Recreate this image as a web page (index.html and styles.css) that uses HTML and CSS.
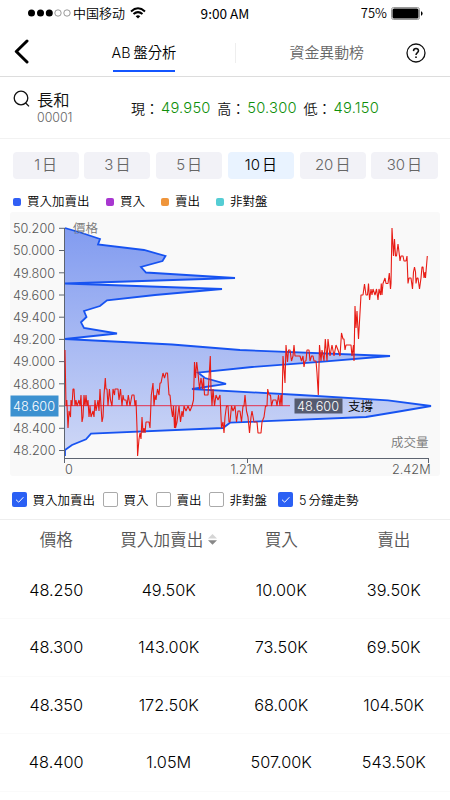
FILE: index.html
```html
<!DOCTYPE html>
<html lang="zh-Hant">
<head>
<meta charset="utf-8">
<title>AB盤分析</title>
<link rel="stylesheet" href="styles.css">
</head>
<body>
<div class="status">
  <div class="carrier">
    <svg width="43" height="8" viewBox="0 0 43 8"><g fill="#000"><circle cx="3.5" cy="4" r="3.5"/><circle cx="12.5" cy="4" r="3.5"/><circle cx="21.3" cy="4" r="3.5"/></g><g fill="none" stroke="#555" stroke-width=".6"><circle cx="30" cy="4" r="3.2"/><circle cx="39" cy="4" r="3.2"/></g></svg>
    <span lang="zh-Hans">中国移动</span>
    <svg class="wifi" width="16" height="12" viewBox="0 0 16 12" fill="none" stroke="#000" stroke-width="2"><path d="M1 4.4Q8-1.8 15 4.4M3.5 7.1Q8 3.2 12.5 7.1"/><path d="M8 11.5 5.7 9.2Q8 7.5 10.3 9.2Z" fill="#000" stroke="none"/></svg>
  </div>
  <div class="clock">9:00 AM</div>
  <div class="power"><span>75%</span>
    <svg width="32" height="13" viewBox="0 0 32 13"><rect x=".5" y=".5" width="28" height="12" rx="2" fill="#fff" stroke="#999"/><rect x="1.5" y="1.5" width="26" height="10" rx="1.5"/><path d="M30 4.3q1.6.4 1.6 2.2T30 8.7z"/></svg>
  </div>
</div>
<header class="nav">
  <svg class="back" width="15" height="25" viewBox="0 0 15 25"><path d="M13 2 2.3 12.5 13 23" fill="none" stroke="#000" stroke-width="3" stroke-linecap="round" stroke-linejoin="round"/></svg>
  <div class="tab active">AB<span class="hair"></span>盤分析</div>
  <i class="divider"></i>
  <div class="tab">資金異動榜</div>
  <svg class="help" width="20" height="20" viewBox="0 0 20 20" fill="none" stroke="#111" stroke-width="1.3"><circle cx="10" cy="10" r="9"/><path d="M7.5 8.1Q7.6 5.5 10 5.5T12.5 7.8C12.5 9.7 10 9.6 10 12" stroke-width="1.5"/><circle cx="10" cy="14.2" r=".9" fill="#111" stroke="none"/></svg>
</header>
<section class="stock">
  <svg class="search" width="18" height="18" viewBox="0 0 18 18" fill="none" stroke="#111" stroke-width="1.3"><circle cx="8" cy="8" r="6.8"/><path d="m12.4 12.8 3.6 3.6"/></svg>
  <div class="name"><b>長和</b><small>00001</small></div>
  <div class="quotes"><span lang="ja">現：</span><em>49.950</em><span lang="ja">高：</span><em>50.300</em><span lang="ja">低：</span><em>49.150</em></div>
</section>
<div class="periods">
  <div>1<i></i>日</div><div>3<i></i>日</div><div>5<i></i>日</div><div class="on">10<i></i>日</div><div>20<i></i>日</div><div>30<i></i>日</div>
</div>
<div class="legend">
  <span class="key blue">買入加賣出</span><span class="key purple">買入</span><span class="key orange">賣出</span><span class="key cyan">非對盤</span>
</div>
<svg class="chart" viewBox="10 212 430 264" width="430" height="264">
  <defs><linearGradient id="area" x1="0" y1="0" x2="0" y2="1"><stop offset="0" stop-color="#2452e9" stop-opacity=".56"/><stop offset="1" stop-color="#2452e9" stop-opacity=".2"/></linearGradient></defs>
  <rect class="plot" x="10" y="212" width="430" height="264" rx="3"/>
  <path class="volume" d="M65 228 82 233 100 239 98 244.5 144 250 165.5 256 162.5 261 141 267 146 272.5 235 278 65 283.5 222 289 155 295 107 300.3 100 306 84 311 86.5 317 81 322.3 84 328 117 333.5 65 339 172 344.5 240 350 390 356 320 361.8 252 367 198 372.7 205 378 226 383.8 192 389 300 395 388 400.3 431 406 399 411.5 366 417 230 422.7 223 428 91 433.7 86 439.3 72 445 65 450 V456"/>
  <path class="axis" d="M64.5 228V458.5H428.5M59 228.3h6M59 250.5h6M59 272.8h6M59 295h6M59 317.2h6M59 339.4h6M59 361.6h6M59 383.8h6M59 406h6M59 428.3h6M59 450.5h6M64.5 458v5M247.5 458v5M428.5 458v5"/>
  <path class="support" d="M65 405.7H290"/>
  <path class="price" d="M65 350 66 406 66.8 400 68 428 69 411 70.5 417 71 400 72 406 73 389 74 389 75 406 76 400 77 406 79 400 80 406 81 395 82 422 83 417 84 395 85 406 86 395 87 406 88 400 89 417 90 406 91 417 93 411 94 417 95 400 96 411 98 400 99 411 100 389 101 406 102 422 103 417 104 395 105.3 378 106 389 107 389 108 406 109.4 389 110.5 400 112 406 113 389 114.5 395 115 389 118 389 119 400 120.5 389 122 406 123 395 124 400 126 400 127 406 128.3 395 130 406 132 395 134 395 135 406 136 400 137 428 137.6 456 139 439 140 433 141 439 142 417 143 433 144 428 145 433 146 422 149 422 150 428 151.3 395 153 383 154 406 155 395 156 400 157.5 389 159 395 160 383 161 383 163 373 164.5 378 166 373 167.5 373 169 395 170 395 171 406 172.5 417 173.5 406 174.5 428 176 406 175.5 428 177 422 179 406 180.5 422 182 411 183 417 184 406 186 411 188 406 190 411 192 406 193.5 400 194.5 362 195.5 378 196.7 362 198 373 199.5 389 201 378 202.5 389 203.5 378 204.5 395 208 395 209 378 210.3 356 211 389 212 406 213 389 214.5 406 216 395 218 400 220 395 221.5 428 223 422 224 433 225 417 226.5 406 228 406 229 422 230 422 231.5 406 233 411 235 406 236.5 422 238 411 240 411 241.5 422 243 406 244 406 245 395 246.5 411 248 417 249.5 433 251 417 252 411 254 422 257 422 258 433 261 433 262 422 264 417 265.5 406 267 406 267.7 389 269 395 270.5 395 271.5 406 273 400 276 400 277 406 278.5 395 280 406 281 395 282 406 283 356 285 383 286 345 287.5 362 288.5 350 290 350 291.5 361 293 356 294 345 295 356 300 356 301.5 361 303 356 304 367 305 361 306 361 307 350 309 350 310 361 311.5 356 313 356 314 361 316 361 317 373 318.3 395 319.5 345 321 361 322 350 324 361 325.3 339 327 361 328 339 330 356 332 345 334 356 336 345 338 350 340 356 341.5 333 343 339 344 339 345 350 346 345 351 345 352 356 353.5 345 354 361 355 306 356 328 357 311 358.5 339 361 295 363 295 364.5 284 366 295 367.5 295 368.5 283.5 369.6 300 371 289 372 295 373 289 375 295 376.5 289 378 300 379 289 380.5 295 381.3 283.5 382 295 383 283.5 385 278 386 283.5 388 283.5 389.3 273 390.5 289 391 283.5 392 228 393.5 256 394.5 239 395.5 256 396.5 256 398 244 399.5 256 400 261 401 256 403 256 404 261 406 261 407 256 408 283.5 409 278 411 278 412.5 289 413.5 272 414.5 267 415.5 272 416 283.5 417 278 418 278 419.5 289 421 278 422 267 423 267 424 278 425 272 425.5 278 427.3 256"/>
  <g class="ticks"><text x="13" y="233">50.200</text><text x="13" y="255.2">50.000</text><text x="13" y="277.5">49.800</text><text x="13" y="299.7">49.600</text><text x="13" y="321.9">49.400</text><text x="13" y="344.1">49.200</text><text x="13" y="366.3">49.000</text><text x="13" y="388.5">48.800</text><text x="13" y="433">48.400</text><text x="13" y="455.2">48.200</text></g>
  <rect class="current" x="10.5" y="395.5" width="48" height="21"/><text class="current-text" x="13" y="410.7">48.600</text>
  <text class="label" x="73" y="232.5">價格</text>
  <text class="label" x="391" y="447">成交量</text>
  <g class="volumes"><text x="65" y="474">0</text><text x="230.5" y="474">1.21M</text><text x="392" y="474">2.42M</text></g>
  <rect class="tag" x="294.5" y="398.5" width="48" height="15"/><text class="tag-text" x="297" y="410.7">48.600</text><text class="tag-note" x="348" y="411">支撐</text>
</svg>
<div class="toggles">
  <label class="checked"><svg viewBox="0 0 15 15"><path d="M4 7.7 6.7 10.2 11.4 5.2"/></svg><span>買入加賣出</span></label>
  <label><svg viewBox="0 0 15 15"></svg><span>買入</span></label>
  <label><svg viewBox="0 0 15 15"></svg><span>賣出</span></label>
  <label><svg viewBox="0 0 15 15"></svg><span>非對盤</span></label>
  <label class="checked"><svg viewBox="0 0 15 15"><path d="M4 7.7 6.7 10.2 11.4 5.2"/></svg><span>5<i></i>分鐘走勢</span></label>
</div>
<div class="table">
  <div class="row head"><div>價格</div><div>買入加賣出<svg width="9" height="11" viewBox="0 0 9 11"><path d="M0 4.5 4.5 0 9 4.5z" fill="#d5d5d5"/><path d="M0 6.2 4.5 10.7 9 6.2z" fill="#888"/></svg></div><div>買入</div><div>賣出</div></div>
  <div class="row"><div>48.250</div><div>49.50K</div><div>10.00K</div><div>39.50K</div></div>
  <div class="row"><div>48.300</div><div>143.00K</div><div>73.50K</div><div>69.50K</div></div>
  <div class="row"><div>48.350</div><div>172.50K</div><div>68.00K</div><div>104.50K</div></div>
  <div class="row"><div>48.400</div><div>1.05M</div><div>507.00K</div><div>543.50K</div></div>
</div>
</body>
</html>
```
FILE: styles.css
```css
* { box-sizing: border-box; }
body { margin: 0; width: 450px; height: 800px; overflow: hidden; background: #fff; color: #111; font-family: Inter, "Noto Sans CJK TC", sans-serif; font-weight: 350; }
svg { display: block; flex: none; }
em, i { font-style: normal; }
.status { display: grid; grid-template-columns: 1fr 60px 1fr; height: 26px; align-items: center; font: 13px/26px "Noto Sans CJK TC", sans-serif; font-weight: 350; color: #000; white-space: nowrap; }
.carrier { display: flex; align-items: center; padding-left: 28px; }
.carrier span { margin-left: 2px; font-family: "Noto Sans CJK SC", sans-serif; }
.wifi { margin-left: 5px; }
.clock { text-align: center; font-size: 13.6px; font-weight: 400; }
.power { display: flex; justify-content: flex-end; align-items: center; gap: 4px; padding-right: 27px; }
.nav { display: flex; height: 51px; border-bottom: 1px solid #ddd; align-items: flex-start; padding: 13px 24px 0 14px; }
.tab { font-size: 14.9px; line-height: 28px; color: #666; white-space: nowrap; height: 33px; }
.tab.active { margin-left: 84px; width: 62px; color: #000; border-bottom: 2px solid #1455ff; font-size: 14.3px; display: flex; justify-content: center; }
.hair { flex: 0 0 3px; }
.divider { width: 1px; height: 20px; background: #eee; margin: 4px 53.5px 0 60px; }
.help { margin: 4px 0 0 auto; }
.stock { display: flex; height: 62px; border-bottom: 1px solid #f2f2f2; padding-left: 13px; }
.search { margin-top: 13px; }
.name { width: 94px; margin-left: 6px; padding-top: 12px; }
.name b, .name small { display: block; }
.name b { font-size: 16.3px; line-height: 22px; font-weight: 350; color: #111; }
.name small { font-size: 12.4px; line-height: 13px; color: #666; }
.quotes { display: flex; align-items: center; font-size: 14.7px; height: 61px; white-space: nowrap; }
.quotes span { width: 30px; font-size: 14px; line-height: 20px; font-family: "Noto Sans CJK JP", sans-serif; }
.quotes em { width: 56.3px; color: #0f8f0a; letter-spacing: .2px; }
.periods { display: flex; gap: 5.6px; padding: 13px 12.5px 0; }
.periods div { flex: 1; height: 27px; border-radius: 4px; background: #f2f2f7; color: #666; font-size: 15px; line-height: 26px; text-align: center; }
.periods i { display: inline-block; width: 2px; }
.periods .on { background: #e9f3ff; color: #000; }
.legend { height: 33px; display: flex; align-items: center; padding: 12px 0 0 13px; font-size: 12.5px; line-height: 16px; color: #000; }
.key { display: flex; align-items: center; white-space: nowrap; }
.key::before { content: ""; width: 8px; height: 8px; border-radius: 2px; margin-right: 6px; }
.blue { width: 93px; } .blue::before { background: #315ff5; }
.purple { width: 55px; } .purple::before { background: #a837d0; }
.orange { width: 55px; } .orange::before { background: #ef953b; }
.cyan::before { background: #55cdd4; }
.chart { margin-left: 10px; font-family: Inter, "Noto Sans CJK TC", sans-serif; }
.plot { fill: #f9f9f9; }
.volume { fill: url(#area); stroke: #1753f1; stroke-width: 1.8; }
.axis { fill: none; stroke: #5d6470; stroke-width: 1; }
.support { stroke: #e3304d; stroke-width: 1; }
.price { fill: none; stroke: #e81c15; stroke-width: 1.1; stroke-linejoin: bevel; }
.ticks, .volumes { font-size: 12.7px; fill: #555; }
.label { font-size: 12.5px; fill: #777; }
.current { fill: #3c91d0; }
.current-text, .tag-text { fill: #fff; font-size: 12.7px; }
.tag { fill: #555b70; }
.tag-note { font-size: 12.5px; fill: #000; }
.toggles { display: flex; height: 44px; border-bottom: 1px solid #eee; padding: 4px 0 0 11.5px; font-size: 12.5px; color: #000; align-items: center; }
.toggles label { display: flex; align-items: center; white-space: nowrap; gap: 6px; }
.toggles label svg { width: 15px; height: 15px; border: 1px solid #aaa; border-radius: 2px; background: #fff; }
.toggles .checked svg { border: 0; background: #2b60f4; }
.toggles path { fill: none; stroke: #fff; stroke-width: 1; }
.toggles i { display: inline-block; width: 2px; }
.toggles label:nth-child(1) { width: 91px; }
.toggles label:nth-child(2), .toggles label:nth-child(3) { width: 53px; }
.toggles label:nth-child(4) { width: 69.5px; }
.row { display: grid; grid-template-columns: repeat(4, 112.5px); height: 57.5px; align-items: center; text-align: center; font-size: 16.3px; color: #000; border-bottom: 1px solid #fafafa; }
.row.head { height: 41.5px; padding-bottom: 3px; color: #555; border: 0; font-size: 16.6px; }
.head div { display: flex; align-items: center; justify-content: center; white-space: nowrap; gap: 5px; }
```
